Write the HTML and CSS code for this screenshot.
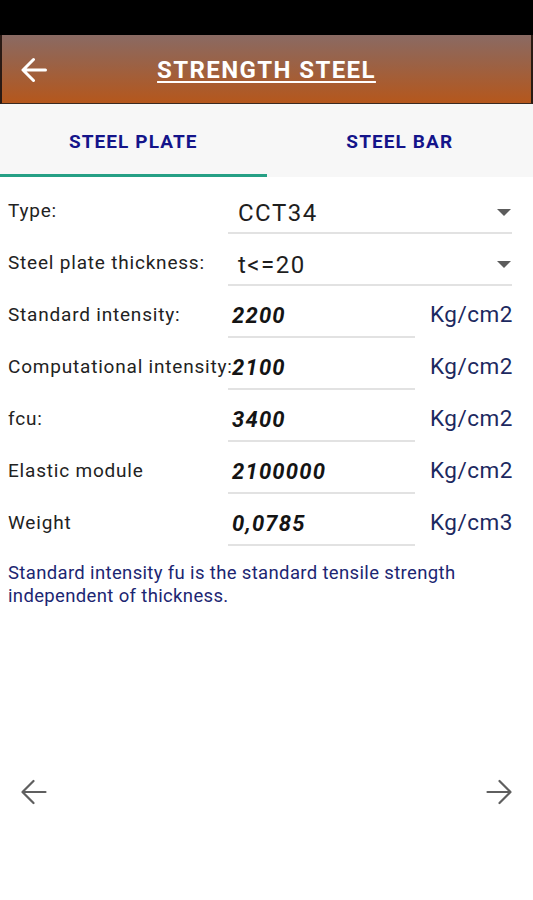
FILE: index.html
```html
<!DOCTYPE html>
<html>
<head>
<meta charset="utf-8">
<link rel="stylesheet" href="styles.css">
</head>
<body>
<div class="status"></div>
<header class="appbar">
  <svg class="back" viewBox="0 0 26 26" width="26" height="26"><path d="M24.5 13H2.5M12.5 2.5L2 13l10.5 10.5" fill="none" stroke="#fff" stroke-width="3" stroke-linecap="round" stroke-linejoin="round"/></svg>
  <h1 class="title">STRENGTH STEEL</h1>
</header>
<nav class="tabs">
  <div class="tab active">STEEL PLATE</div>
  <div class="tab">STEEL BAR</div>
</nav>
<main class="form">
  <div class="row">
    <div class="label">Type:</div>
    <div class="spinner"><span class="sval">CCT34</span><span class="caret"></span></div>
  </div>
  <div class="row">
    <div class="label">Steel plate thickness:</div>
    <div class="spinner"><span class="sval">t&lt;=20</span><span class="caret"></span></div>
  </div>
  <div class="row">
    <div class="label">Standard intensity:</div>
    <div class="field">2200</div>
    <div class="unit">Kg/cm2</div>
  </div>
  <div class="row">
    <div class="label">Computational intensity:</div>
    <div class="field">2100</div>
    <div class="unit">Kg/cm2</div>
  </div>
  <div class="row">
    <div class="label">fcu:</div>
    <div class="field">3400</div>
    <div class="unit">Kg/cm2</div>
  </div>
  <div class="row">
    <div class="label">Elastic module</div>
    <div class="field">2100000</div>
    <div class="unit">Kg/cm2</div>
  </div>
  <div class="row">
    <div class="label">Weight</div>
    <div class="field">0,0785</div>
    <div class="unit">Kg/cm3</div>
  </div>
  <p class="note">Standard intensity fu is the standard tensile strength independent of thickness.</p>
</main>
<div class="pager">
  <svg viewBox="0 0 26 26" width="26" height="26"><path d="M24.5 13H2M12.5 2L1.5 13l11 11" fill="none" stroke="#5f5f5f" stroke-width="2.2" stroke-linecap="round" stroke-linejoin="round"/></svg>
  <svg viewBox="0 0 26 26" width="26" height="26"><path d="M1.5 13H24M13.5 2l11 11-11 11" fill="none" stroke="#5f5f5f" stroke-width="2.2" stroke-linecap="round" stroke-linejoin="round"/></svg>
</div>
</body>
</html>
```
FILE: styles.css
```css
html, body {
  margin: 0;
  padding: 0;
  background: #ffffff;
  font-family: Roboto, "Liberation Sans", sans-serif;
}
body {
  width: 533px;
  height: 900px;
  overflow: hidden;
}
.status {
  height: 35px;
  background: #000;
}
.appbar {
  height: 69px;
  box-sizing: border-box;
  border-left: 2px solid #2a1a14;
  border-right: 2px solid #2a1a14;
  border-bottom: 1px solid #3a2a22;
  background: linear-gradient(to bottom, #8a6a63 0%, #9a6247 40%, #b5571c 100%);
  display: flex;
  align-items: center;
  position: relative;
}
.back {
  margin-left: 19px;
  margin-top: 2px;
  flex: none;
}
.title {
  position: absolute;
  left: 0;
  right: 0;
  margin: 0;
  padding-top: 2px;
  text-align: center;
  color: #fff;
  font-size: 24px;
  letter-spacing: 1.4px;
  font-weight: 700;
  text-decoration: underline;
  text-decoration-thickness: 2px;
  text-underline-offset: 3px;
  pointer-events: none;
}
.tabs {
  display: flex;
  height: 73px;
  background: #f7f7f7;
}
.tab {
  flex: 1;
  display: flex;
  align-items: center;
  justify-content: center;
  color: #14148a;
  font-weight: 700;
  font-size: 19px;
  letter-spacing: 1.1px;
  box-sizing: border-box;
  padding-top: 5px;
  border-bottom: 3px solid transparent;
}
.tab.active {
  border-bottom-color: #26a085;
}
.form {
  padding: 12px 0 0 8px;
}
.row {
  display: flex;
  align-items: flex-start;
  height: 52px;
}
.label {
  width: 220px;
  flex: none;
  font-size: 19px;
  letter-spacing: 0.8px;
  color: #222;
  padding-top: 10px;
  white-space: nowrap;
}
.spinner {
  width: 284px;
  height: 45px;
  box-sizing: border-box;
  border-bottom: 2px solid #e2e2e2;
  display: flex;
  align-items: center;
  justify-content: space-between;
}
.sval {
  padding-left: 10px;
  font-size: 24px;
  letter-spacing: 1.5px;
  color: #1e1e1e;
  padding-top: 4px;
}
.caret {
  width: 0;
  height: 0;
  border-left: 7px solid transparent;
  border-right: 7px solid transparent;
  border-top: 7px solid #5c5c5c;
  margin-right: 1px;
  margin-top: 4px;
}
.field {
  width: 187px;
  height: 45px;
  box-sizing: border-box;
  border-bottom: 2px solid #e2e2e2;
  padding-left: 4px;
  padding-top: 10px;
  font-size: 22px;
  letter-spacing: 1.2px;
  font-weight: 700;
  font-style: italic;
  color: #141414;
}
.unit {
  margin-left: 15px;
  padding-top: 8px;
  font-size: 22.5px;
  letter-spacing: 0.5px;
  color: #1c2960;
}
.note {
  margin: 9px 0 0;
  padding-right: 10px;
  font-size: 18.5px;
  letter-spacing: 0.35px;
  line-height: 23px;
  color: #1c2672;
}
.pager {
  position: absolute;
  top: 779px;
  left: 21px;
  right: 21px;
  display: flex;
  justify-content: space-between;
}
```
